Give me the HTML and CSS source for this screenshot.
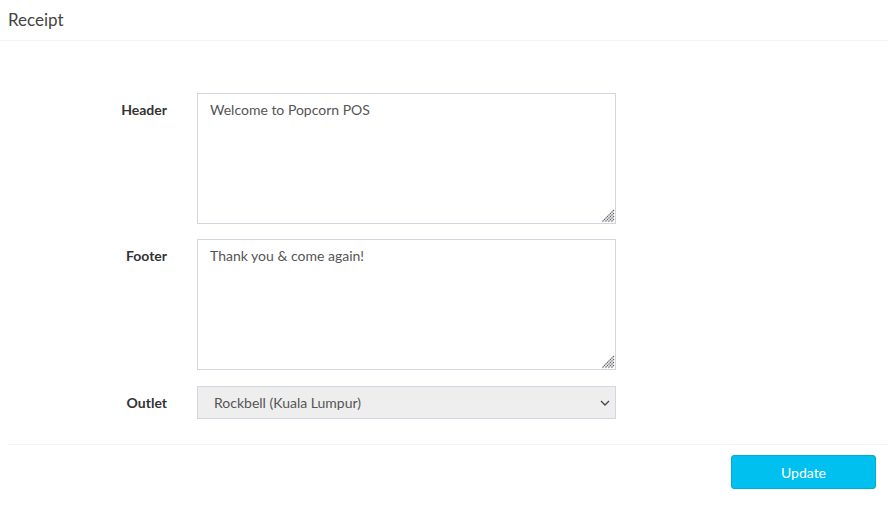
FILE: index.html
```html
<!DOCTYPE html>
<html>
<head>
<meta charset="utf-8">
<link rel="stylesheet" href="styles.css">
</head>
<body>
<div class="box">
  <div class="box-header"><h3 class="box-title">Receipt</h3></div>
  <form class="box-body">
    <div class="row">
      <label class="lbl">Header</label>
      <div class="ta-wrap">
        <textarea class="ta">Welcome to Popcorn POS</textarea>
        <svg class="grip" width="15" height="14" viewBox="0 0 15 14"><path d="M14 1 L2 13 M14 4 L5 13 M14 7 L8 13 M14 10 L11 13" fill="none" stroke="#666" stroke-width="1.2" stroke-dasharray="1.5 0.6"/></svg>
      </div>
    </div>
    <div class="row">
      <label class="lbl">Footer</label>
      <div class="ta-wrap">
        <textarea class="ta">Thank you &amp; come again!</textarea>
        <svg class="grip" width="15" height="14" viewBox="0 0 15 14"><path d="M14 1 L2 13 M14 4 L5 13 M14 7 L8 13 M14 10 L11 13" fill="none" stroke="#666" stroke-width="1.2" stroke-dasharray="1.5 0.6"/></svg>
      </div>
    </div>
    <div class="row row-sel">
      <label class="lbl">Outlet</label>
      <div class="sel-wrap">
        <select class="sel" disabled><option>Rockbell (Kuala Lumpur)</option></select>
        <svg class="chev" width="10" height="6" viewBox="0 0 10 6"><path d="M1 1 L5 5 L9 1" fill="none" stroke="#444" stroke-width="1.3"/></svg>
      </div>
    </div>
  </form>
  <div class="box-footer">
    <button class="btn" type="button">Update</button>
  </div>
</div>
</body>
</html>
```
FILE: styles.css
```css
html, body { margin: 0; padding: 0; background: #fff; }
body { font-family: Lato, "Open Sans", sans-serif; color: #333; font-size: 14px; }
.box-header { height: 40px; border-bottom: 1px solid #f4f4f4; padding: 0 8px; display: flex; align-items: center; box-sizing: content-box; }
.box-title { margin: 0; font-size: 17px; font-weight: 400; color: #444; line-height: 1; position: relative; top: -1px; }
.box-body { padding: 52px 0 25px 0; display: flex; flex-direction: column; gap: 15px; }
.row { display: grid; grid-template-columns: 167px 419px; column-gap: 30px; align-items: start; }
.row-sel { margin-top: 1px; }
.lbl { text-align: right; font-weight: 700; font-size: 14px; color: #333; padding-top: 8px; }
.ta-wrap { position: relative; width: 419px; height: 131px; }
.ta { box-sizing: border-box; width: 419px; height: 131px; border: 1px solid #d2d6de; padding: 7px 12px; font-family: Lato, "Open Sans", sans-serif; font-size: 14px; color: #555; margin: 0; display: block; resize: none; }
.grip { position: absolute; right: 1px; bottom: 1px; }
.sel-wrap { position: relative; width: 419px; }
.sel { appearance: none; -webkit-appearance: none; box-sizing: border-box; width: 419px; height: 33px; border: 1px solid #d2d6de; background: #eee; padding: 0 16px; font-family: Lato, "Open Sans", sans-serif; font-size: 14px; color: #555; opacity: 1; margin: 0; display: block; border-radius: 0; }
.chev { position: absolute; right: 6px; top: 14px; }
.box-footer { margin-left: 8px; border-top: 1px solid #f4f4f4; padding: 10px 12px 0 0; display: flex; justify-content: flex-end; }
.btn { width: 145px; height: 34px; background: #00c0ef; border: 1px solid #00acd6; border-radius: 3px; color: #fff; font-family: Lato, "Open Sans", sans-serif; font-size: 14px; cursor: pointer; }
```
